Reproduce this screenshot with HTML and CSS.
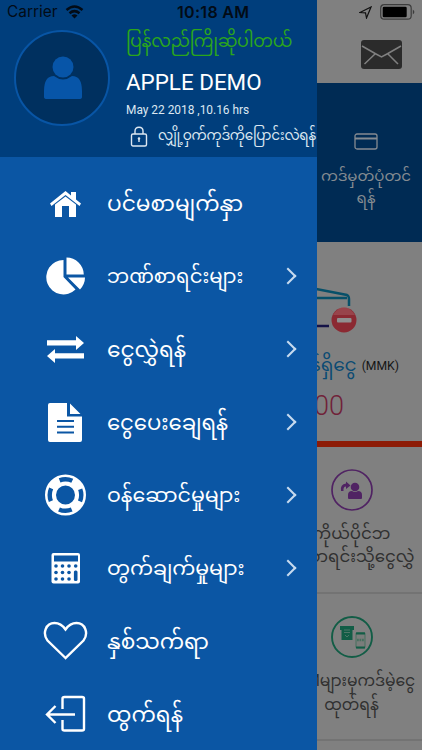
FILE: index.html
```html
<!DOCTYPE html>
<html lang="my">
<head>
<meta charset="utf-8">
<title>Mobile banking</title>
<link rel="stylesheet" href="styles.css">
</head>
<body>
<div class="screen">
  <main class="page">
    <header class="topbar">
      <svg class="mail" viewBox="0 0 41 29"><rect width="41" height="29" rx="3" fill="#2b2b2b"/><path d="M1 6L15 14L20.500 17L26 14L40 6M3.500 24L14 14M37 24L27 14" fill="none" stroke="#808080" stroke-width="1.500"/></svg>
    </header>
    <section class="banner">
      <div class="banner-tile">
        <svg width="24" height="17" viewBox="0 0 24 17"><rect x="1" y="1" width="22" height="15" rx="2" fill="none" stroke="#858b91" stroke-width="1.300"/><path d="M1 5.500H23" stroke="#858b91" stroke-width="2"/></svg>
        <p>ကဒ်မှတ်ပုံတင်<br>ရန်</p>
      </div>
    </section>
    <section class="balance">
      <svg class="wallet" width="80" height="56" viewBox="0 0 80 56"><path d="M0 4L36 11Q38 12 38 15V22M0 14H36" fill="none" stroke="#075069" stroke-width="2.500"/><path d="M0 42H18" stroke="#151347" stroke-width="2.500"/><circle cx="33" cy="36" r="12.500" fill="#8b2932"/><path d="M22 31Q33 15 44 31Z" fill="#a8656a" opacity=".45"/><rect x="26" y="34" width="14.500" height="4.500" rx="1" fill="#909090"/></svg>
      <p class="balance-label"><span>လက်ကျန်ရှိငွေ</span><small>(MMK)</small></p>
      <p class="amount">0.00</p>
    </section>
    <section class="tile">
      <svg width="42" height="42" viewBox="0 0 42 42"><circle cx="21" cy="21" r="20" fill="none" stroke="#502363" stroke-width="1.700"/><g fill="#502363"><circle cx="24" cy="18" r="4.300"/><path d="M17 29V26Q17 22 21 22Q24 24 27 22Q31 22 31 26V29Q31 30 30 30H18Q17 30 17 29ZM10 22Q9 15 15 14.500V12.500L19.500 16.500L15 20V17.500Q12 17.500 12.500 22Z"/></g></svg>
      <p>ကိုယ်ပိုင်ဘ<br>ဏ်စာရင်းသို့ငွေလွှဲ</p>
    </section>
    <section class="tile tile-cash">
      <svg width="42" height="42" viewBox="0 0 42 42"><circle cx="21" cy="21" r="20" fill="none" stroke="#125d46" stroke-width="1.900"/><path d="M9 10H23V14H21.500V24H10.500V14H9Z" fill="#125d46"/><path d="M13 14H19M13 16.500H19M14 19L16 21L18 19" fill="none" stroke="#4d7768" stroke-width="1"/><rect x="25" y="16.500" width="9" height="15.500" rx="1" fill="#7a7d7b" stroke="#47705f"/><path d="M25 17.500H34M25 31.500H34" stroke="#125d46" stroke-width="2"/><path d="M26 24H33" stroke="#47705f" stroke-width="2.500" stroke-dasharray="1.800 .7"/></svg>
      <p>ATMများမှကဒ်မဲ့ငွေ<br>ထုတ်ရန်</p>
    </section>
  </main>

  <aside class="drawer">
    <header class="profile">
      <svg class="avatar" viewBox="0 0 96 96"><circle cx="48" cy="48" r="47" fill="#00305f" stroke="#0855a5" stroke-width="2"/><g fill="#0755a8"><circle cx="49" cy="37" r="10.500"/><path d="M30 67V61Q30 46 40 46Q49 53 58 46Q68 46 68 61V67Q68 69 65 69H33Q30 69 30 67Z"/></g></svg>
      <div class="profile-text">
        <p class="welcome">ပြန်လည်ကြိုဆိုပါတယ်</p>
        <p class="name">APPLE DEMO</p>
        <p class="date">May 22 2018 ,10.16 hrs</p>
        <p class="pin"><svg width="18" height="21" viewBox="0 0 18 21"><rect x="1.500" y="8" width="15" height="12" rx="1.500"/><path d="M5 8V5Q5 1.200 9 1.200T13 5V8M9 12V16"/><circle cx="9" cy="12.500" r=".6"/></svg><span>လျှို့ဝှက်ကုဒ်ကိုပြောင်းလဲရန်</span></p>
      </div>
    </header>
    <nav class="menu">
      <a class="item large"><svg viewBox="0 0 46 46"><path d="M7 23.500L22.500 11L28 15.500V12H33V19.500L38 23.500L36.500 26L22.500 15L8.500 26Z" fill="#fff"/><path d="M12 24.500L22.500 16.500L33 24.500V37H26V26H19V37H12Z" fill="#fff"/></svg><span>ပင်မစာမျက်နှာ</span></a>
      <a class="item small"><svg viewBox="0 0 46 46"><g fill="#fff"><path d="M20.500 7A17.200 17.200 0 1 0 32.500 36.500L20.500 24Z"/><path d="M23.500 4.500A17.500 17.500 0 0 1 40.800 21.500H23.500ZM25 24.500H42Q42 31 37 36.500Z"/></g></svg><span>ဘဏ်စာရင်းများ</span><i></i></a>
      <a class="item large"><svg viewBox="0 0 46 46"><path d="M4 14.200H33V10L41 17L33 24V19.500H4ZM41 27.200H12V23L4 30L12 37V32.500H41Z" fill="#fff"/></svg><span>ငွေလွှဲရန်</span><i></i></a>
      <a class="item medium"><svg viewBox="0 0 46 46"><path d="M7 4H24V17.500H39V41Q39 43 37 43H7Q5 43 5 41V6Q5 4 7 4ZM27 4.500L37.500 15H27Z" fill="#fff"/><path d="M14 22H31M14 27.800H31M14 33.500H31" stroke="#0b56a4" stroke-width="2"/></svg><span>ငွေပေးချေရန်</span><i></i></a>
      <a class="item"><svg viewBox="0 0 46 46"><circle cx="22.500" cy="23" r="15" fill="none" stroke="#fff" stroke-width="11"/><circle cx="22.500" cy="23" r="15.800" fill="none" stroke="#0b56a4" stroke-width="4.400" stroke-dasharray="13 11.820" stroke-dashoffset="6.500"/></svg><span>ဝန်ဆောင်မှုများ</span><i></i></a>
      <a class="item"><svg viewBox="0 0 46 46"><rect x="8.500" y="8" width="28.500" height="30.500" rx="2" fill="#fff"/><g fill="#0b56a4"><path d="M11 10.500H35V16.500H11Z"/><circle cx="13" cy="21" r="1.800"/><circle cx="19.500" cy="21" r="1.800"/><circle cx="26" cy="21" r="1.800"/><circle cx="32.700" cy="21" r="1.800"/><circle cx="13" cy="27.500" r="1.800"/><circle cx="19.500" cy="27.500" r="1.800"/><circle cx="26" cy="27.500" r="1.800"/><circle cx="13" cy="34" r="1.800"/><circle cx="19.500" cy="34" r="1.800"/><circle cx="26" cy="34" r="1.800"/><rect x="30.900" y="25.500" width="3.600" height="10.500" rx="1.500"/></g></svg><span>တွက်ချက်မှုများ</span><i></i></a>
      <a class="item large"><svg viewBox="0 0 46 46"><path d="M22.500 40L4.500 22.500C-1 15 3 5 11.500 5Q18 5 22.500 11.500Q27 5 33.500 5C42 5 46 15 40.500 22.500Z" fill="none" stroke="#fff" stroke-width="2.400"/></svg><span>နှစ်သက်ရာ</span></a>
      <a class="item large"><svg viewBox="0 0 46 46"><path d="M19.500 18V7.500Q19.500 6 21.500 6H39Q41 6 41 7.500V38Q41 39.500 39 39.500H21.500Q19.500 39.500 19.500 38V29M32 23.500H4M12.500 15L4 23.500L12.500 32" fill="none" stroke="#fff" stroke-width="2.400"/></svg><span>ထွက်ရန်</span></a>
    </nav>
  </aside>

  <div class="status">
    <span class="carrier">Carrier</span>
    <svg class="wifi" width="19" height="14" viewBox="0 0 19 14"><path d="M1.500 5Q9.500 -2 17.500 5M4.500 8.200Q9.500 4 14.500 8.200" fill="none" stroke="#020b16" stroke-width="2.500"/><path d="M6.500 10.500Q9.500 8 12.500 10.500L9.500 13.500Z" fill="#020b16"/></svg>
    <b class="clock">10:18 AM</b>
    <svg class="locate" width="13" height="13" viewBox="0 0 13 13"><path d="M1 6.500L12 1L7.500 12L6.500 6.800Z" fill="none" stroke="#111" stroke-width="1.200"/></svg>
    <svg width="35" height="16" viewBox="0 0 35 16"><rect x=".7" y=".7" width="30.500" height="14.500" rx="3.500" fill="none" stroke="#3c3c3c" stroke-width="1.200"/><rect x="2.700" y="2.700" width="24" height="10.500" rx="1.300" fill="#000"/><path d="M32.800 5.500Q36 8 32.800 10.500Z" fill="#3c3c3c"/></svg>
  </div>
</div>
</body>
</html>
```
FILE: styles.css
```css
* { box-sizing: border-box; }
body { margin: 0; }
p { margin: 0; }
svg { display: block; flex: none; }

.screen {
  position: relative;
  width: 422px;
  height: 750px;
  overflow: hidden;
  background: #808080;
  font-family: Roboto, "Noto Sans Myanmar", "Padauk", "Noto Sans", sans-serif;
}

.page { display: flex; flex-direction: column; align-items: flex-end; height: 750px; }
.topbar { height: 83px; padding: 40px 20px 0 0; }
.mail { width: 41px; height: 29px; }
.banner { width: 100%; height: 159px; background: #002b54; display: flex; justify-content: flex-end; }
.banner-tile {
  width: 112px;
  padding-top: 50px;
  display: flex;
  flex-direction: column;
  align-items: center;
  gap: 15px;
  color: #858b91;
  font-size: 15px;
  line-height: 22px;
  text-align: center;
  white-space: nowrap;
}
.balance {
  width: 100%;
  height: 205px;
  padding: 42px 23px 0 0;
  border-bottom: 6px solid #8d1b06;
  display: flex;
  flex-direction: column;
  align-items: flex-end;
}
.wallet { margin-right: 8px; }
.balance-label {
  display: flex;
  align-items: center;
  gap: 5px;
  height: 44px;
  margin-top: 5px;
  color: #0b4b73;
  font-size: 18.500px;
  white-space: nowrap;
}
.balance-label small { padding-bottom: 2px; color: #151515; font-size: 12.200px; }
.amount { margin: 1px 55px 0 0; color: #702239; font-size: 27px; line-height: 32px; font-weight: 300; }
.tile {
  width: 141px;
  height: 147px;
  flex: none;
  padding-top: 22px;
  border-bottom: 2px solid #737373;
  display: flex;
  flex-direction: column;
  align-items: center;
  gap: 11px;
  color: #303030;
  font-size: 16.600px;
  line-height: 23px;
  text-align: center;
  white-space: nowrap;
}
.tile-cash { font-size: 15.600px; line-height: 24px; }

.drawer {
  position: absolute;
  inset: 0 auto 0 0;
  width: 317px;
  overflow: hidden;
  background: #0b56a4;
  color: #fff;
}
.profile { display: flex; gap: 16px; height: 157px; padding: 0 0 0 14px; background: #003e7c; }
.avatar { width: 96px; height: 96px; margin-top: 30px; }
.profile-text { padding-top: 25px; white-space: nowrap; }
.welcome { height: 33px; line-height: 33px; color: #2ba51b; font-size: 17.500px; letter-spacing: -.3px; }
.name { height: 45px; line-height: 48px; font-size: 22.400px; }
.date { height: 18px; line-height: 15px; font-size: 11.900px; color: #dce7f1; }
.pin { display: flex; align-items: center; gap: 10px; height: 30px; padding-left: 4px; color: #dce7f1; font-size: 13.500px; letter-spacing: -.25px; }
.pin span { padding-top: 2px; }
.pin svg { fill: none; stroke: #dce7f1; stroke-width: 1.400; }

.menu { padding-top: 9px; }
.item { display: flex; align-items: center; height: 73px; padding: 0 23px 0 43px; font-size: 20.500px; white-space: nowrap; }
.item.large { font-size: 21.700px; }
.item.medium { font-size: 21.200px; }
.item.small { font-size: 19.700px; }
.item span { padding-top: 6px; }
.item svg { width: 46px; height: 46px; margin-right: 18px; }
.item i { width: 12px; height: 12px; margin-left: auto; border: solid #c8dbef; border-width: 2px 2px 0 0; transform: rotate(45deg); }

.status {
  position: absolute;
  inset: 0 0 auto 0;
  display: flex;
  align-items: center;
  height: 24px;
  padding: 0 7px;
  color: #020b16;
  font: 16px/24px Inter, sans-serif;
}
.carrier { width: 58px; font-size: 15.400px; }
.clock { width: 80px; margin-left: 93px; font-size: 16px; font-weight: 600; letter-spacing: .3px; white-space: nowrap; }
.locate { margin-left: auto; margin-right: 8px; }
```
